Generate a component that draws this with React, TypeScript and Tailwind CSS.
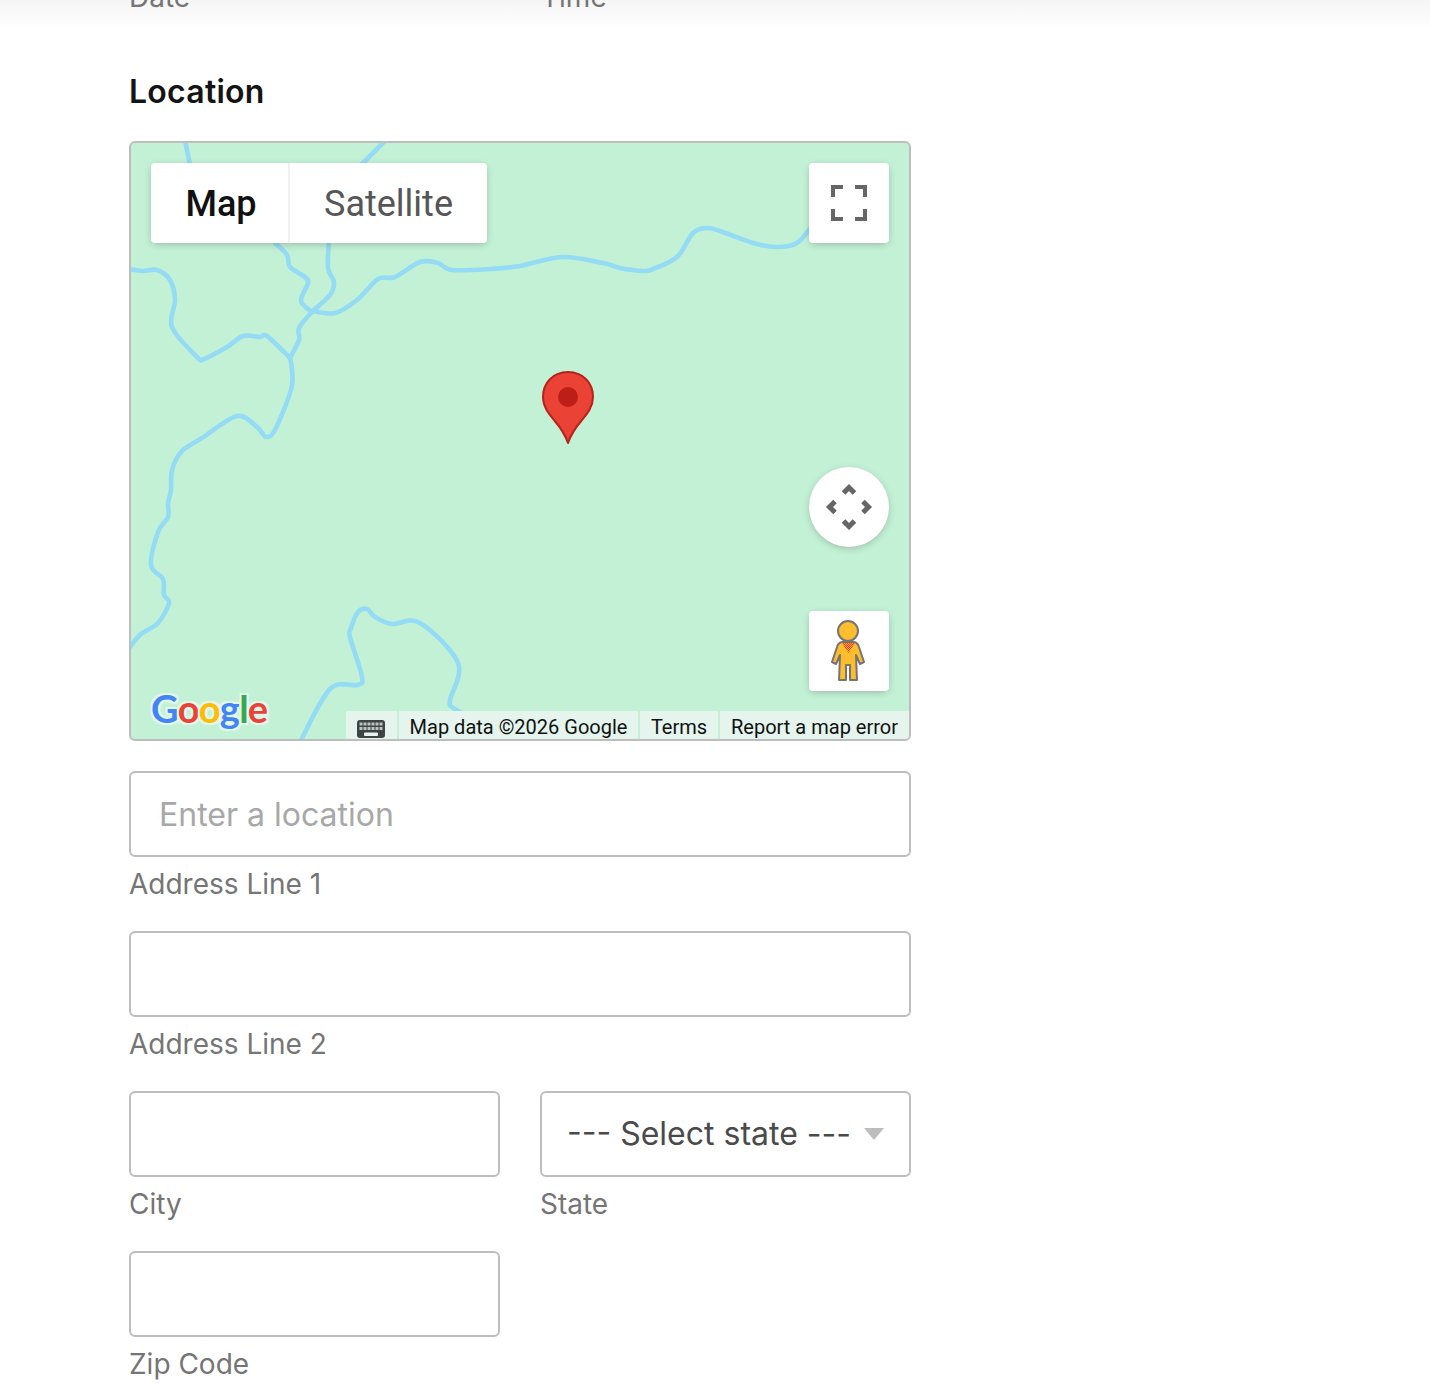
import React from "react";

type P = [number, number];

function smooth(pts: P[]): string {
  let d = `M${pts[0][0]} ${pts[0][1]}`;
  for (let i = 0; i < pts.length - 1; i++) {
    const p0 = pts[Math.max(i - 1, 0)];
    const p1 = pts[i];
    const p2 = pts[i + 1];
    const p3 = pts[Math.min(i + 2, pts.length - 1)];
    const c1x = p1[0] + (p2[0] - p0[0]) / 6;
    const c1y = p1[1] + (p2[1] - p0[1]) / 6;
    const c2x = p2[0] - (p3[0] - p1[0]) / 6;
    const c2y = p2[1] - (p3[1] - p1[1]) / 6;
    d += ` C${c1x.toFixed(1)} ${c1y.toFixed(1)} ${c2x.toFixed(1)} ${c2y.toFixed(1)} ${p2[0]} ${p2[1]}`;
  }
  return d;
}

const rivers: P[][] = [
  [[128, 269], [143, 271], [157, 270], [170, 280], [175, 300], [172, 327], [197, 357], [204, 359], [227, 347], [243, 336], [260, 337], [267, 336], [290, 358]],
  [[290, 358], [292, 370], [291, 390], [275, 430], [267, 437], [262, 433], [257, 427], [237, 416], [202, 438], [182, 451], [172, 470], [171, 490], [168, 503], [168, 517], [158, 532], [151, 565], [163, 579], [164, 595], [169, 603], [158, 623], [140, 635], [128, 650]],
  [[290, 358], [299, 340], [299, 328], [312, 312], [330, 295], [334, 282], [328, 268], [329, 240]],
  [[312, 312], [301, 301], [308, 283], [305, 277], [290, 267], [287, 255], [275, 243]],
  [[312, 311], [335, 313], [357, 300], [378, 279], [395, 277], [420, 262], [438, 263], [452, 270], [490, 269], [520, 266], [562, 257], [603, 263], [620, 268], [643, 271], [653, 269], [677, 257], [693, 233], [707, 228], [720, 231], [753, 243], [777, 247], [797, 243], [812, 226]],
  [[185, 140], [190, 165]],
  [[386, 140], [362, 164]],
  [[300, 742], [330, 689], [357, 685], [362, 677], [350, 637], [351, 628], [358, 612], [367, 609], [375, 617], [392, 624], [420, 623], [458, 663], [450, 700], [452, 707], [462, 713]],
];

function Field({ label, children }: { label: string; children: React.ReactNode }) {
  return (
    <div className="flex flex-col mb-[27px]">
      {children}
      <label className="mt-[7px] text-[28px] leading-[40px] text-[#757575]">{label}</label>
    </div>
  );
}

const inputCls =
  "w-full h-[86px] border-2 border-[#bdbdbd] rounded-[6px] bg-white text-[32px] text-[#4a4a4a] placeholder:text-[#a8a8a8] outline-none";

const logoHalo =
  "[text-shadow:2px_0_0_#e4f6ec,-2px_0_0_#e4f6ec,0_2px_0_#e4f6ec,0_-2px_0_#e4f6ec,2px_2px_0_#e4f6ec,-2px_2px_0_#e4f6ec,2px_-2px_0_#e4f6ec,-2px_-2px_0_#e4f6ec]";

function MapPanel() {
  return (
    <div className="relative w-full h-[600px] border-2 border-[#bdbdbd] rounded-[6px] bg-[#c3f1d5] overflow-hidden font-['Roboto',sans-serif]">
      <svg className="absolute left-[-2px] top-[-2px]" width="782" height="600" viewBox="129 141 782 600" fill="none">
        <defs>
          <pattern id="neck" width="2" height="2" patternUnits="userSpaceOnUse">
            <rect width="1.2" height="1.2" fill="#ea4335" />
            <rect x="1" y="1" width="1" height="1" fill="#ea4335" />
          </pattern>
        </defs>
        {rivers.map((r, i) => (
          <path key={i} d={smooth(r)} stroke="#94dbf5" strokeWidth="4.6" strokeLinecap="round" strokeLinejoin="round" />
        ))}
        <path
          d="M568 372 C553 372 543 383 543 397 C543 407 549 414 554 420 C560 427 565 434 568 443 C571 434 576 427 582 420 C587 414 593 407 593 397 C593 383 583 372 568 372Z"
          fill="#ea4335"
          stroke="#b5231c"
          strokeWidth="2"
          strokeLinejoin="round"
        />
        <circle cx="568" cy="397" r="10" fill="#bd1f18" />
      </svg>

      <div className="absolute left-[20px] top-[20px] flex h-[80px] rounded-[4px] bg-white shadow-[0_2px_8px_-2px_rgba(0,0,0,0.3)] text-[36px]">
        <div className="w-[139px] pl-[3px] pt-[1px] flex items-center justify-center font-medium text-[#111111] border-r-2 border-[#f0f0f0]">Map</div>
        <div className="w-[197px] pt-[1px] flex items-center justify-center text-[#565656]">Satellite</div>
      </div>

      <div className="absolute left-[678px] top-[20px] w-[80px] h-[80px] rounded-[4px] bg-white shadow-[0_2px_8px_-2px_rgba(0,0,0,0.3)] flex items-center justify-center">
        <svg width="36" height="36" viewBox="0 0 36 36" fill="none" stroke="#666666" strokeWidth="4">
          <path d="M2 12V2H12" />
          <path d="M24 2H34V12" />
          <path d="M2 24V34H12" />
          <path d="M24 34H34V24" />
        </svg>
      </div>

      <div className="absolute left-[678px] top-[324px] w-[80px] h-[80px] rounded-full bg-white shadow-[0_2px_8px_-2px_rgba(0,0,0,0.3)] flex items-center justify-center">
        <svg width="48" height="48" viewBox="0 0 48 48" fill="none" stroke="#666666" strokeWidth="5">
          <path d="M18.5 10L24 4.5L29.5 10" />
          <path d="M18.5 38L24 43.5L29.5 38" />
          <path d="M10 18.5L4.5 24L10 29.5" />
          <path d="M38 18.5L43.5 24L38 29.5" />
        </svg>
      </div>

      <div className="absolute left-[678px] top-[468px] w-[80px] h-[80px] rounded-[4px] bg-white shadow-[0_2px_8px_-2px_rgba(0,0,0,0.3)]">
        <svg width="80" height="80" viewBox="809 611 80 80" fill="none">
          <path
            d="M842 642 L854 642 Q858 643 859 647 L864 662 L860 664 L856 655 L857 680 L850 680 L850 665 L846 665 L846 680 L839 680 L840 655 L836 664 L832 662 L837 647 Q838 643 842 642Z"
            fill="#fdbd2c"
            stroke="#757575"
            strokeWidth="2"
            strokeLinejoin="round"
          />
          <path d="M842 643H855L848.5 653Z" fill="url(#neck)" />
          <circle cx="848" cy="631" r="10" fill="#fdbd2c" stroke="#757575" strokeWidth="2" />
        </svg>
      </div>

      <div className={"absolute left-[20px] top-[542px] flex text-[38px] leading-[46px] font-bold tracking-[-0.8px] font-['Lato',sans-serif] " + logoHalo}>
        <span className="text-[#4285f4]">G</span>
        <span className="text-[#ea4335]">o</span>
        <span className="text-[#fbbc05]">o</span>
        <span className="text-[#4285f4]">g</span>
        <span className="text-[#34a853]">l</span>
        <span className="text-[#ea4335]">e</span>
      </div>

      <div className="absolute right-0 bottom-0 flex gap-[2px] h-[28px] text-[20px] leading-[32px] text-[#111111]">
        <div className="w-[51px] bg-[#e5f5ed] flex items-start justify-center pt-[9px] pr-[2px]">
          <svg width="28" height="18" viewBox="0 0 28 18">
            <rect width="28" height="18" rx="3" fill="#3f4345" />
            <g fill="#b9c4bf">
              {[2.5, 6.5, 10.5, 14.5, 18.5, 22.5].map((x) => (
                <React.Fragment key={x}>
                  <rect x={x} y="2.5" width="3" height="3" />
                  <rect x={x} y="7" width="3" height="3" />
                </React.Fragment>
              ))}
            </g>
            <rect x="7" y="12.5" width="14" height="3.5" rx="1" fill="#e5f5ed" />
          </svg>
        </div>
        <div className="w-[239px] bg-[#e5f5ed] text-center whitespace-nowrap">Map data ©2026 Google</div>
        <div className="w-[78px] bg-[#e5f5ed] text-center">Terms</div>
        <div className="w-[189px] bg-[#e5f5ed] text-center whitespace-nowrap">Report a map error</div>
      </div>
    </div>
  );
}

export default function App() {
  return (
    <div className="relative h-[1398px] overflow-hidden bg-white font-['Inter',sans-serif]">
      <div className="absolute inset-x-0 top-0 h-[30px] bg-gradient-to-b from-[#f5f5f5] to-white" />
      <div className="relative w-[782px] ml-[129px] -mt-[23px] flex flex-col">
        <div className="grid grid-cols-2 gap-x-[40px] h-[91px] text-[28px] leading-[40px] text-[#757575]">
          <span>Date</span>
          <span className="pl-[1px]">Time</span>
        </div>
        <h2 className="text-[32px] leading-[48px] font-semibold tracking-[0.25px] text-[#141414] mb-[25px]">Location</h2>
        <MapPanel />
        <div className="mt-[30px] flex flex-col">
          <Field label="Address Line 1">
            <input className={inputCls + " px-[28px]"} placeholder="Enter a location" />
          </Field>
          <Field label="Address Line 2">
            <input className={inputCls + " px-[28px]"} />
          </Field>
          <div className="grid grid-cols-2 gap-x-[40px]">
            <Field label="City">
              <input className={inputCls + " px-[28px]"} />
            </Field>
            <Field label="State">
              <div className="relative">
                <select className={inputCls + " px-[25px] appearance-none"} defaultValue="">
                  <option value="">--- Select state ---</option>
                </select>
                <span className="absolute right-[27px] top-[37px] border-x-[10px] border-t-[12px] border-x-transparent border-t-[#bdbdbd]" />
              </div>
            </Field>
            <Field label="Zip Code">
              <input className={inputCls + " px-[28px]"} />
            </Field>
          </div>
        </div>
      </div>
    </div>
  );
}
